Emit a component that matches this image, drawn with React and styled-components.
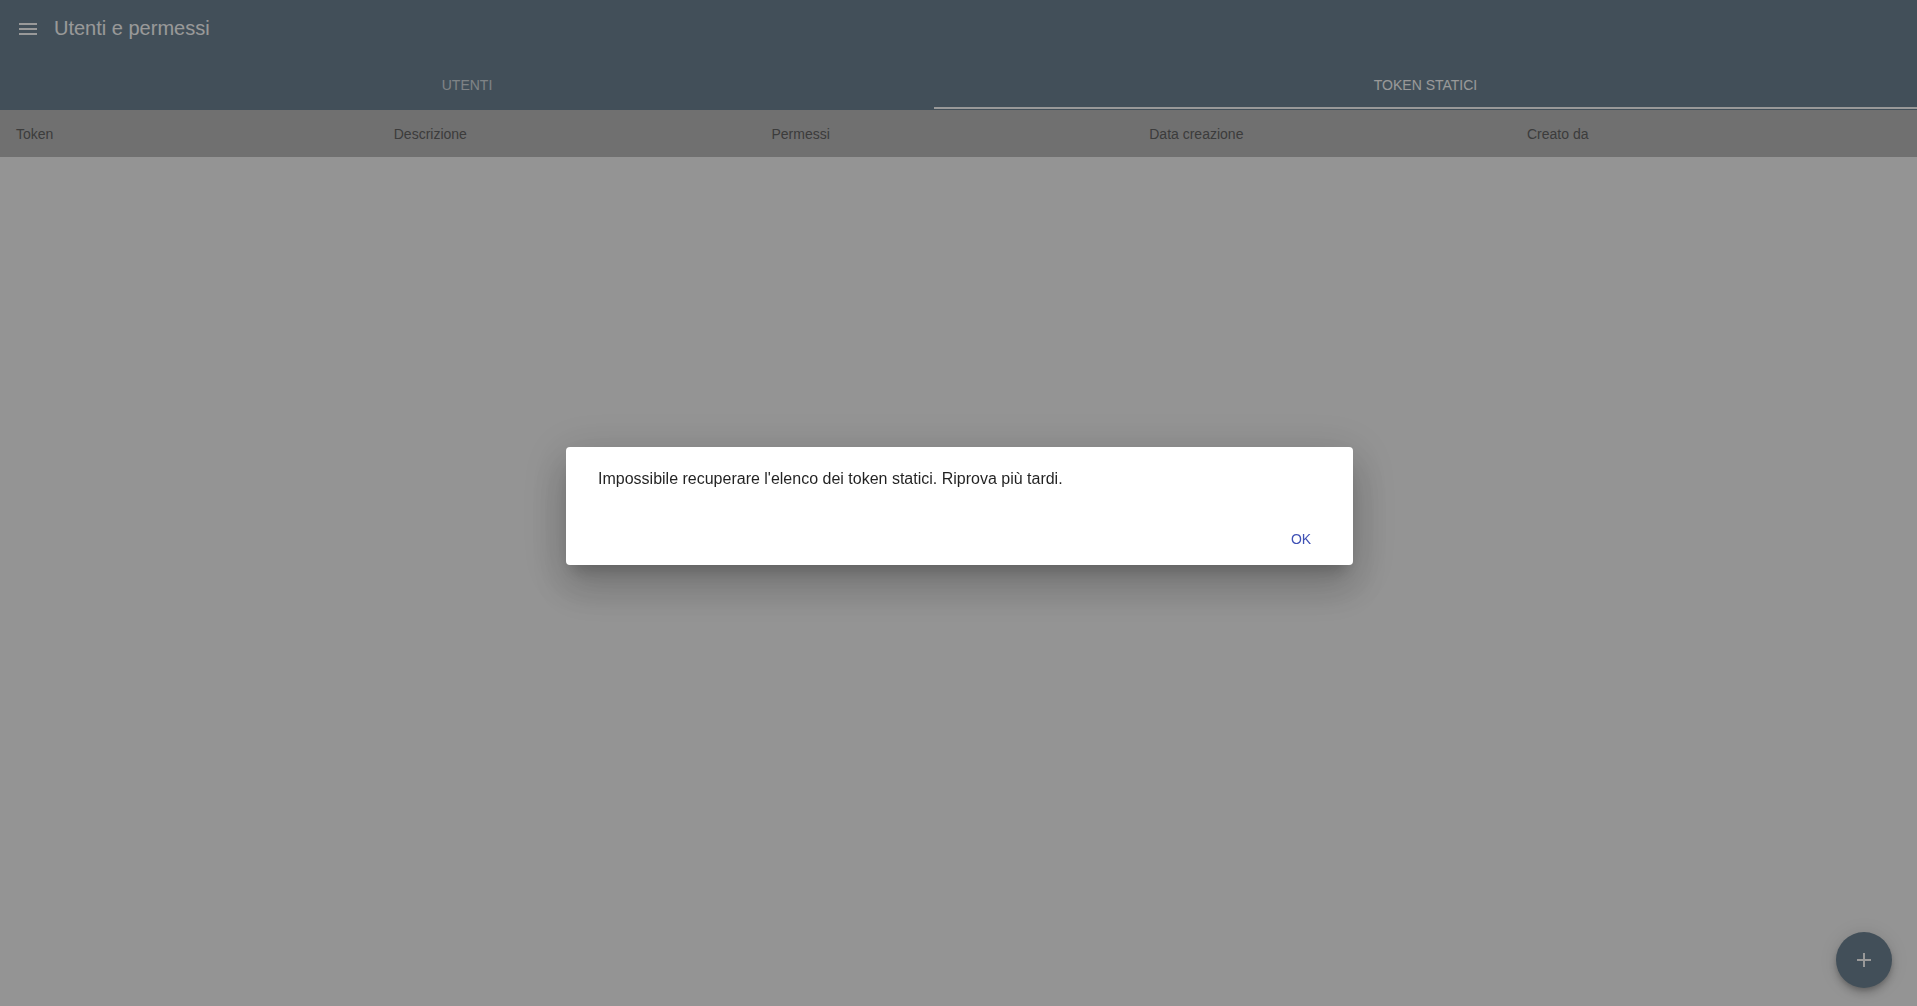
import React from "react";
import styled, { createGlobalStyle } from "styled-components";

const GlobalStyle = createGlobalStyle`
  html, body {
    margin: 0;
    padding: 0;
  }
  body {
    font-family: "Liberation Sans", Arial, sans-serif;
    background: #f7f7f7;
    overflow: hidden;
  }
`;

const columns = ["Token", "Descrizione", "Permessi", "Data creazione", "Creato da"];

export default function App() {
  return (
    <>
      <GlobalStyle />
      <Page>
        <AppBar>
          <Toolbar>
            <MenuButton aria-label="menu">
              <svg width="24" height="24" viewBox="0 0 24 24">
                <path d="M3 18h18v-2H3v2zm0-5h18v-2H3v2zm0-7v2h18V6H3z" fill="currentColor" />
              </svg>
            </MenuButton>
            <Title>Utenti e permessi</Title>
          </Toolbar>
          <TabRow>
            <Tab $width="934px">Utenti</Tab>
            <Tab $selected>Token statici</Tab>
          </TabRow>
        </AppBar>

        <HeaderRow>
          {columns.map((c) => (
            <HeaderCell key={c}>{c}</HeaderCell>
          ))}
        </HeaderRow>

        <Fab aria-label="aggiungi">
          <svg width="24" height="24" viewBox="0 0 24 24">
            <path d="M19 13h-6v6h-2v-6H5v-2h6V5h2v6h6v2z" fill="currentColor" />
          </svg>
        </Fab>
      </Page>

      <Backdrop>
        <Dialog role="dialog">
          <DialogContent>
            Impossibile recuperare l'elenco dei token statici. Riprova più tardi.
          </DialogContent>
          <DialogActions>
            <TextButton>OK</TextButton>
          </DialogActions>
        </Dialog>
      </Backdrop>
    </>
  );
}

const Page = styled.div`
  min-height: 100vh;
  display: flex;
  flex-direction: column;
`;

const AppBar = styled.header`
  background: #6e8494;
  color: #ffffff;
  display: flex;
  flex-direction: column;
`;

const Toolbar = styled.div`
  height: 62px;
  box-sizing: border-box;
  padding: 0 0 5px 16px;
  display: flex;
  align-items: center;
`;

const MenuButton = styled.div`
  width: 24px;
  height: 24px;
  display: flex;
  align-items: center;
  justify-content: center;
  margin-right: 14px;
  color: #ffffff;
`;

const Title = styled.h1`
  margin: 0;
  font-size: 20px;
  font-weight: 400;
  color: #ffffff;
`;

const TabRow = styled.div`
  height: 48px;
  display: flex;
`;

const Tab = styled.div`
  position: relative;
  box-sizing: border-box;
  padding-bottom: 3px;
  flex: ${({ $width }) => ($width ? `0 0 ${$width}` : "1 1 auto")};
  display: flex;
  align-items: center;
  justify-content: center;
  font-size: 14px;
  text-transform: uppercase;
  color: #ffffff;
  opacity: ${({ $selected }) => ($selected ? 1 : 0.7)};

  &::after {
    content: "";
    display: ${({ $selected }) => ($selected ? "block" : "none")};
    position: absolute;
    left: 0;
    right: 0;
    bottom: 1px;
    height: 2px;
    background: #ffffff;
  }
`;

const HeaderRow = styled.div`
  height: 47px;
  background: #bbbbbb;
  display: grid;
  grid-template-columns: repeat(5, 377.75px);
  align-items: center;
`;

const HeaderCell = styled.div`
  padding-left: 16px;
  font-size: 14px;
  color: #646464;
`;

const Fab = styled.button`
  position: fixed;
  right: 25px;
  bottom: 18px;
  width: 56px;
  height: 56px;
  border: none;
  border-radius: 50%;
  background: #6e8494;
  color: #ffffff;
  display: flex;
  align-items: center;
  justify-content: center;
  padding: 0;
  box-shadow: 0 3px 5px -1px rgba(0, 0, 0, 0.2), 0 6px 10px 0 rgba(0, 0, 0, 0.14),
    0 1px 18px 0 rgba(0, 0, 0, 0.12);
`;

const Backdrop = styled.div`
  position: fixed;
  inset: 0;
  padding-left: 2px;
  background: rgba(0, 0, 0, 0.4);
  display: flex;
  align-items: center;
  justify-content: center;
  z-index: 10;
`;

const Dialog = styled.div`
  width: 787px;
  margin-top: 6px;
  background: #ffffff;
  border-radius: 4px;
  display: flex;
  flex-direction: column;
  box-shadow: 0 11px 15px -7px rgba(0, 0, 0, 0.2), 0 24px 38px 3px rgba(0, 0, 0, 0.14),
    0 9px 46px 8px rgba(0, 0, 0, 0.12);
`;

const DialogContent = styled.div`
  padding: 20px 32px 22px;
  font-size: 16px;
  line-height: 24px;
  color: rgba(0, 0, 0, 0.87);
`;

const DialogActions = styled.div`
  display: flex;
  justify-content: flex-end;
  padding: 8px 20px 8px;
`;

const TextButton = styled.button`
  min-width: 64px;
  height: 36px;
  padding: 6px 8px;
  border: none;
  background: transparent;
  border-radius: 4px;
  font-family: "Liberation Sans", Arial, sans-serif;
  font-size: 14px;
  text-transform: uppercase;
  color: #3f51b5;
  cursor: pointer;
`;
